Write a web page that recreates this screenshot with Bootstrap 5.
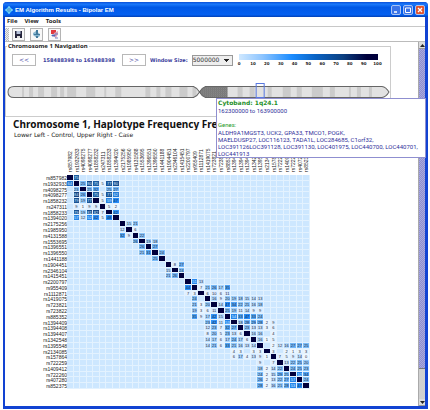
<!DOCTYPE html>
<html lang="en">
<head>
<meta charset="utf-8">
<meta name="viewport" content="width=device-width, initial-scale=1">
<title>EM Algorithm Results - Bipolar EM</title>
<link href="https://cdn.jsdelivr.net/npm/bootstrap@5.3.0/dist/css/bootstrap.min.css" rel="stylesheet">
<style>
body{font-family:"DejaVu Sans",sans-serif;font-size:5px;line-height:7px;color:#222;background:#fff}
button,select{font-family:inherit;line-height:1}
.app-window{min-height:100vh;padding:2px 2px 1px 3px}
.frame{border:solid #1243d2;border-width:0 3px 3px 2px;border-radius:4px 4px 0 0}
.titlebar{height:15px;margin:0 -3px 0 -2px;padding:0 3px 0 2px;border-radius:4px 4px 0 0;color:#fff;background:linear-gradient(#0a50d8,#1a78fa 15%,#0058e6 35%,#0560f0 85%,#0340b4)}
.titlebar h1{font:bold 6px/8px "Liberation Sans",sans-serif}
.title-icon{margin-right:2px}
.win-btns{gap:2px}
.win-btn{width:10px;height:10px;border:1px solid #a9c4f4;border-radius:2px;background:#3b74e8;color:#fff}
.win-btn.close-btn{background:#e2542c}
.win-btn svg,.tool-btn svg{display:block}
.menubar{height:10px;gap:7px;padding:0 2px;border-bottom:1px solid #c8c8c8}
.menubar a{color:#222;font:bold 6px/9px "Noto Sans",sans-serif}
.toolbar{height:15px;border-bottom:1px solid #bbb}
.grip{width:4px;height:13px;background:repeating-conic-gradient(#bbb 0 25%,#eee 0 50%) 0 0/2px 2px}
.tools{gap:5px;margin-left:3px}
.tool-btn{width:13px;height:13px;border:1px solid #b4b4b4;background:#f8f8f8}
.main-pane{min-width:0}
.nav-box{min-width:0;margin:2px 27px 0 0;border:1px solid #ccc;height:73px}
.nav-box legend{float:none;width:auto;margin:0 0 0 1px;padding:0 1px;font:bold 6px/5px "Noto Sans",sans-serif}
.controls{padding:5px 12px 0 6px;color:#393b9b}
.step-btn{width:24px;height:12px;border:1px solid #b8b8b8;background:#fff;color:#393b9b;font-size:6px}
.range-text{margin:0 7px}
.size-box{width:41px;height:11px;border:1px solid #999;background:#eee;color:#333;font-size:6px;appearance:none;
 background-image:linear-gradient(#222,#222),linear-gradient(#222,#222),linear-gradient(#222,#222);background-repeat:no-repeat;
 background-size:5px 1px,3px 1px,1px 1px;background-position:right 3px top 3px,right 4px top 4px,right 5px top 5px}
.scale{flex:1;margin-left:6px}
.scale-ramp{height:6px;background:linear-gradient(90deg,#cfe8ff,#8cc4ff 17%,#1b8cff 38%,#0a63c4 55%,#0b3f80 75%,#00003c 92%)}
.scale-nums{margin:2px -4px 0 -4px;color:#222;font:bold 4px/4px "DejaVu Sans",sans-serif}
.scale-nums span{width:9px;text-align:center}
.ideogram{margin:16px 0 0 1px}
.ideogram>svg{display:block;width:100%;height:19px}
.gene-tip{left:209px;top:16px;width:210px;z-index:5;padding:0 0 0 1px;border:1px solid #8f8fd0;background:#fff;color:#30309a;font:6px/7px Roboto,sans-serif}
.gene-tip .tip-head{font:bold 6px/8px "DejaVu Sans",sans-serif;color:#1f8f2a}
.gene-tip .tip-sub{color:#1f9a2a;margin-top:7px;line-height:8px}
.main-title{font:bold 10px/12px "Noto Sans",sans-serif;margin:1px 0 0 8px;color:#111}
.sub-title{font-size:6px;line-height:9px;margin:0 0 0 9px}
.haplo{display:block;width:274px;margin:9px 0 13px 31px;font-family:"Liberation Sans",sans-serif;color:#222}
.haplo thead,.haplo tbody{display:grid}
.haplo tbody{height:214px;grid-template-rows:repeat(37,minmax(0,1fr))}
.haplo tr{display:grid;grid-template-columns:31px repeat(37,minmax(0,1fr));min-height:0}
.haplo th,.haplo td{padding:0;font-weight:normal;overflow:hidden;white-space:nowrap;min-width:0}
.haplo thead th{height:27px;padding-top:3px;font-size:5px;line-height:6px;writing-mode:vertical-rl;transform:rotate(180deg)}
.haplo tbody th{font-size:5px;line-height:6px;text-align:right}
.haplo td{border:solid #e3f2ff;border-width:0 1px 1px 0;background:#cde7ff;font-size:4px;line-height:5px;text-align:center}
.scrollbar-v{width:7px;background:#d0d0d0;border-left:1px solid #aaa}
.scrollbar-v button{height:7px;background:#ddd;border:0;border-bottom:1px solid #999}
.scroll-thumb{flex:0 0 88%;background:repeating-conic-gradient(#8f8fcc 0 25%,#a9a9e0 0 50%) 0 0/2px 2px;border-bottom:1px solid #777}
</style>
<script src="https://cdn.jsdelivr.net/npm/bootstrap@5.3.0/dist/js/bootstrap.bundle.min.js"></script>
</head>
<body>
<div class="app-window d-flex flex-column">
<div class="frame d-flex flex-column flex-grow-1">
<header class="titlebar d-flex align-items-center">
 <svg class="title-icon" width="8" height="8" viewBox="0 0 8 8" aria-hidden="true"><path d="M4 0 8 4 4 8 0 4Z" fill="#52c6f4"/><path d="M4 2 6 4 4 6 2 4Z" fill="#1460a8"/><path d="M4 0v8M0 4h8" stroke="#b8ecff" stroke-width=".6"/></svg>
 <h1 class="m-0 me-auto">EM Algorithm Results - Bipolar EM</h1>
 <div class="win-btns d-flex">
 <button class="win-btn p-0" aria-label="Minimize"><svg width="8" height="8"><path d="M2 6h3" stroke="#fff" stroke-width="1.5"/></svg></button>
 <button class="win-btn p-0" aria-label="Maximize"><svg width="8" height="8"><path d="M1.500 2h5v4.500h-5z" fill="none" stroke="#fff"/></svg></button>
 <button class="win-btn close-btn p-0" aria-label="Close"><svg width="8" height="8"><path d="M2 2l4 4M6 2 2 6" stroke="#fff" stroke-width="1.300"/></svg></button>
 </div>
</header>
<nav class="menubar d-flex"><a class="text-decoration-none" href="#">File</a><a class="text-decoration-none" href="#">View</a><a class="text-decoration-none" href="#">Tools</a></nav>
<div class="toolbar d-flex align-items-center">
 <span class="grip"></span>
 <div class="tools d-flex">
 <button class="tool-btn p-0" aria-label="Save"><svg width="11" height="11"><path d="M2 2h7v7H2z" fill="#25253d"/><path d="M3.500 2h4v3h-4z" fill="#b8c4dc"/><path d="M4 7h3v2H4z" fill="#ddd"/></svg></button>
 <button class="tool-btn p-0" aria-label="Print"><svg width="11" height="11"><path d="M2 4l3-2 4 3v2L6 9 2 6z" fill="#8ab7d0"/><path d="M5 1h2v4H5zM3 5h6v1H3zM5 7h2v2H5z" fill="#42799b"/></svg></button>
 <button class="tool-btn p-0" aria-label="Export chart"><svg width="11" height="11"><path d="M2 1h5v4H2z" fill="#e0393e"/><path d="M5 4l4-2v3L7 9 4 7z" fill="#dda4b6"/><path d="M3 6h3v1H3zM6 5h3M6 9h3" stroke="#5067b8" fill="#5067b8" stroke-width=".8"/></svg></button>
 </div>
</div>
<div class="d-flex flex-grow-1">
<main class="main-pane flex-grow-1">
 <fieldset class="nav-box">
 <legend>Chromosome 1 Navigation</legend>
 <div class="controls d-flex align-items-center">
 <button class="step-btn p-0">&lt;&lt;</button>
 <strong class="range-text">158488398 to 163488398</strong>
 <button class="step-btn p-0">&gt;&gt;</button>
 <label class="fw-bold ms-1 me-1" for="winsize">Window Size:</label>
 <select id="winsize" class="size-box p-0 rounded-0"><option>5000000</option></select>
 <div class="scale"><div class="scale-ramp"></div><div class="scale-nums d-flex justify-content-between"><span>0</span><span>10</span><span>20</span><span>30</span><span>40</span><span>50</span><span>60</span><span>70</span><span>80</span><span>90</span><span>100</span></div></div>
 </div>
 <div class="ideogram position-relative">
 <svg viewBox="0 0 382 19" preserveAspectRatio="none" role="img" aria-label="Chromosome 1 ideogram">
 <defs>
 <pattern id="hatch" width="2" height="2" patternUnits="userSpaceOnUse"><path d="M0 0h2v2H0z" fill="#a0a0a0"/><path d="M0 0l2 2" stroke="#555" stroke-width=".7"/></pattern>
 <clipPath id="arms"><path d="M7 4.500H186Q190 6 192 10 190 14 186 15.500H7Q1 15.500 1 10T7 4.500ZM198 4.500H374Q378 5 381 10 378 15 374 15.500H198Q194 14 192 10 194 6 198 4.500Z"/></clipPath>
 </defs>
 <g clip-path="url(#arms)"><path d="M0 4h382v12H0z" fill="#e2e2e2"/>
 <path d="M15 4h2v12h-2zM22 4h4v12h-4zM31 4h6v12h-6zM44 4h6v12h-6zM53 4h4v12h-4zM60 4h9v12h-9zM79 4h9v12h-9zM97 4h2v12h-2zM108 4h6v12h-6zM138 4h5v12h-5zM149 4h4v12h-4zM158 4h6v12h-6zM172 4h8v12h-8zM185 4h4v12h-4zM230 4h5v12h-5zM242 4h5v12h-5zM260 4h4v12h-4zM275 4h8v12h-8zM289 4h5v12h-5zM304 4h11v12h-11zM322 4h5v12h-5zM341 4h2v12h-2zM349 4h4v12h-4zM361 4h3v12h-3z" fill="#cbcbcb"/>
 <path d="M192 4h28v12h-28z" fill="url(#hatch)"/></g>
 <path d="M7 4.500H186Q190 6 192 10 190 14 186 15.500H7Q1 15.500 1 10T7 4.500ZM198 4.500H374Q378 5 381 10 378 15 374 15.500H198Q194 14 192 10 194 6 198 4.500Z" fill="none" stroke="#666"/>
 <path d="M248.500 1.500h8v14h-8z" fill="none" stroke="#5878e0"/>
 </svg>
 <aside class="gene-tip position-absolute" role="tooltip">
 <div class="tip-head">Cytoband: 1q24.1</div>
 <div>162300000 to 163900000</div>
 <div class="tip-sub">Genes:</div>
 <div class="text-nowrap">ALDH9A1MGST3, UCK2, GPA33, TMCO1, POGK,<br>MAELDUSP27, LOC116123, TADA1L, LOC284685, C1orf32,<br>LOC391126LOC391128, LOC391130, LOC401975, LOC440700, LOC440701,<br>LOC441913</div>
 </aside>
 </div>
 </fieldset>
 <h2 class="main-title text-nowrap overflow-hidden">Chromosome 1, Haplotype Frequency Fre</h2>
 <p class="sub-title">Lower Left - Control, Upper Right - Case</p>
 <table class="haplo"><thead></thead><tbody></tbody></table>
</main>
<div class="scrollbar-v d-flex flex-column flex-shrink-0">
 <button class="p-0" aria-label="Scroll up"><svg class="d-block mx-auto" width="5" height="4"><path d="M0 4 2.500 1 5 4z" fill="#222"/></svg></button>
 <div class="scroll-thumb"></div>
 <button class="p-0 mt-auto" aria-label="Scroll down"><svg class="d-block mx-auto" width="5" height="4"><path d="M0 1 2.500 4 5 1z" fill="#222"/></svg></button>
</div>
</div>
</div>
</div>
<script>
const snps="857982 1932933 4098275 4098277 1858232 247311 1858233 1394020 2175256 1985950 4131588 1553695 1396551 1396550 1441188 1904451 2346104 1415451 2200797 955409 1112871 1419075 723821 723822 885352 1394409 1394408 1394407 1342548 1395548 2134085 157864 722259 1409412 722260 407280 852375".split(" ");
// Each row: starting column, then values; "-" is an empty pair and "x" the diagonal.
const rows=[
"0 x 75","0 64 x 25 80 75 5 77 80","1 23 x 25 32 - 25 27","1 84 26 x 75 5 77 62","1 79 19 77 x 5 59 47","1 9 1 9 9 x 5 2","1 79 19 81 82 7 x 42","1 57 12 52 42 5 48 x",
"8 x 15 21","8 12 x 6","8 32 9 x 22","10 26 x 19 18","11 26 x 27","11 21 31 x 24","13 25 x","15 x 8 27","15 15 x 24","15 21 26 x","18 x 51 13","18 44 x 7 21 26 17 35","18 7 3 x 6 10 6 11",
"19 24 - x 16 9 20 19 18 15 14 13","19 21 3 20 x 14 47 34 22 21 16 18","19 19 3 6 11 x 25 19 11 14 9 9","19 35 9 17 42 15 x 54 33 47 33 24","21 23 42 11 53 x 18 28 29 28 2 9","21 12 23 7 32 27 x 23 13 13 3 6","21 8 20 5 23 13 6 x 16 16 - 4","21 14 17 6 17 24 17 6 x 16 1 5","21 14 21 6 33 21 16 13 14 x - 2 12 16 27 27 25",
"25 4 3 - 3 3 x 3 - 2 1 3 3","25 6 17 4 13 9 1 x 7 5 9 14 0","29 9 - 7 x 13 22 25 20","29 18 2 14 22 x 24 25 23","29 24 2 15 29 25 x 52 34","29 26 2 13 22 27 57 x 24","29 28 2 16 21 28 53 47 x"];
const stops=[[0,[238,247,255]],[10,[218,236,255]],[20,[150,203,250]],[30,[95,172,246]],[45,[36,140,250]],[60,[40,130,225]],[75,[28,92,160]],[90,[16,50,110]]];
function shade(v){
 let i=1;while(i<stops.length-1&&stops[i][0]<v)i++;
 const [a,p]=stops[i-1],[b,q]=stops[i],t=(v-a)/(b-a);
 return "rgb("+p.map((c,k)=>Math.round(c+(q[k]-c)*t)).join(",")+")";
}
document.querySelector(".haplo thead").innerHTML="<tr><td class='border-0 bg-transparent'></td>"+snps.map(s=>`<th scope="col">rs${s}</th>`).join("")+"</tr>";
document.querySelector(".haplo tbody").innerHTML=snps.map((s,r)=>{
 const [start,...vals]=rows[r].split(" ");
 let h=`<tr><th scope="row">rs${s}</th>`;
 for(let c=0;c<37;c++){
  const v=vals[c-start];
  if(v==="x")h+=`<td style="background:#00003c"></td>`;
  else if(v===undefined||v==="-")h+="<td></td>";
  else h+=`<td style="background:${shade(+v)};color:${v>50?"#d8ecff":"#16263c"}">${v}</td>`;
 }
 return h+"</tr>";
}).join("");
</script>
</body>
</html>
